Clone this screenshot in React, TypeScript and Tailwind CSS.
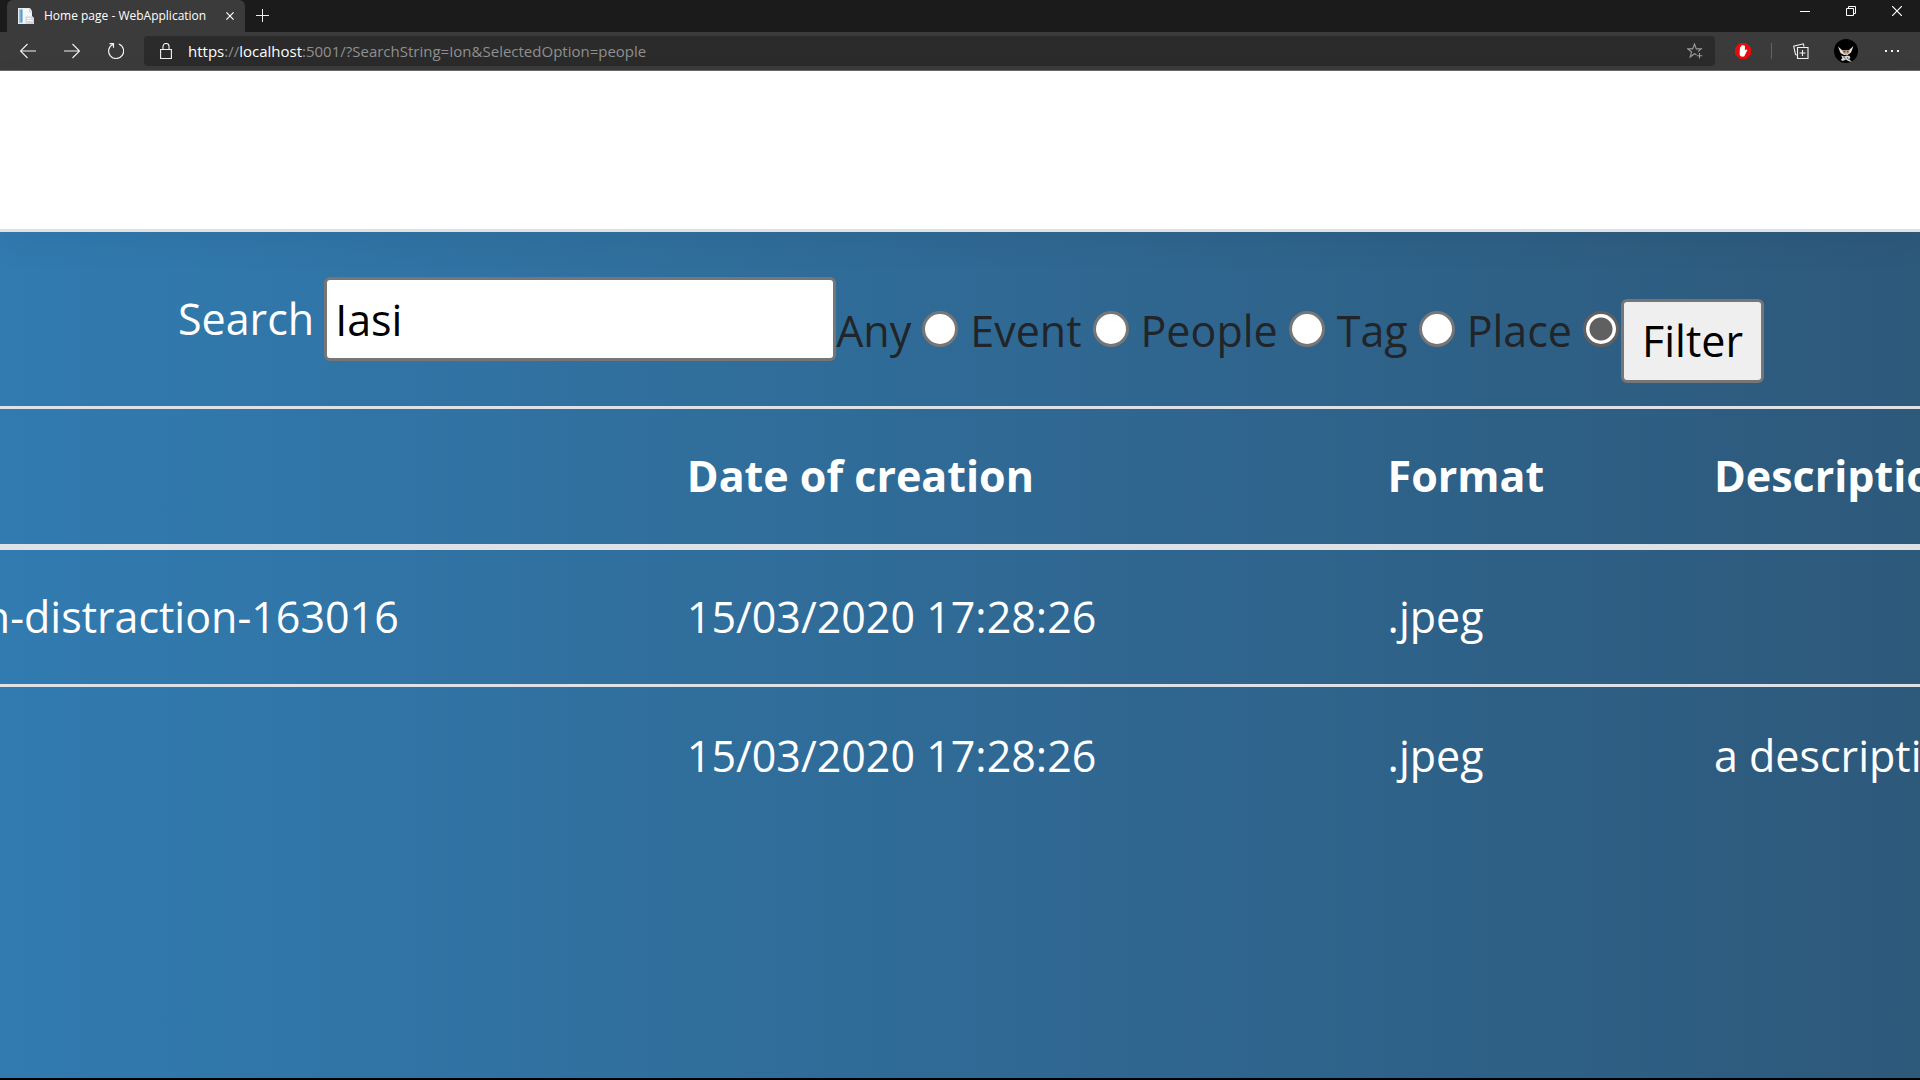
import React from "react";

const OPTIONS = ["Any", "Event", "People", "Tag", "Place"];

const ROWS = [
  { name: "n-distraction-163016", date: "15/03/2020 17:28:26", format: ".jpeg", description: "" },
  { name: "", date: "15/03/2020 17:28:26", format: ".jpeg", description: "a description" },
];

function PageIcon() {
  return (
    <svg width="16" height="16" viewBox="0 0 16 16" aria-hidden="true">
      <path d="M0 0h12l2 3v5l2 2v6H0z" fill="#e4eaee" />
      <path d="M1 1.500h3.500v13H1z" fill="#5b9bc8" />
      <path d="M1 2h1.500v12.500H1z" fill="#8fc6ea" />
      <path d="M5 .8h6.500V4H14v4.500H8V15H5z" fill="#f5f6f7" />
      <path d="M11.500.8V4H14" fill="none" stroke="#c3cad1" strokeWidth=".8" />
      <path d="M7.500 8.500H14l2 1.500v6H7.500z" fill="#d3d9df" />
      <path d="M9 10.500h4M9 12.500h5.500" stroke="#fff" strokeWidth="1" />
    </svg>
  );
}

function Arrow({ flip = false }: { flip?: boolean }) {
  return (
    <svg width="16" height="16" viewBox="0 0 16 16" fill="none" stroke="#f2f2f2" strokeWidth="1.1" aria-hidden="true">
      {flip ? <path d="M0 8h15.500M8.500 1l7 7-7 7" /> : <path d="M16 8H.5M7.500 1l-7 7 7 7" />}
    </svg>
  );
}

function TitleBar() {
  return (
    <div className="flex h-8 items-start bg-[#1b1b1b] pl-[7px]">
      <div className="flex h-8 w-[238px] items-center rounded-t-md bg-[#3b3b3b] pl-[11px] pr-[10px] text-white">
        <PageIcon />
        <span className="ml-[10px] flex-1 whitespace-nowrap text-[12px] leading-4">Home page - WebApplication</span>
        <button type="button" aria-label="Close tab" className="flex h-4 w-[10px] items-center justify-center">
          <svg width="8" height="8" viewBox="0 0 10 10" stroke="#fff" strokeWidth="1.5" aria-hidden="true">
            <path d="M.5 .5l9 9M9.500.5l-9 9" />
          </svg>
        </button>
      </div>
      <button type="button" aria-label="New tab" className="ml-2 flex h-[31px] w-[18px] items-center justify-center">
        <svg width="13" height="13" viewBox="0 0 13 13" stroke="#ececec" aria-hidden="true">
          <path d="M6.500 0v13M0 6.500h13" />
        </svg>
      </button>
      <div className="ml-auto flex h-[22px]">
        <button type="button" aria-label="Minimize" className="flex w-[46px] items-center justify-center">
          <svg width="10" height="10" viewBox="0 0 10 10" stroke="#fff" aria-hidden="true">
            <path d="M0 5.500h10" />
          </svg>
        </button>
        <button type="button" aria-label="Restore" className="flex w-[46px] items-center justify-center">
          <svg width="10" height="10" viewBox="0 0 10 10" fill="none" stroke="#fff" aria-hidden="true">
            <path d="M.5 2.500h7v7h-7zM2.500 2.500v-2h7v7h-2" />
          </svg>
        </button>
        <button type="button" aria-label="Close" className="flex w-[46px] items-center justify-center">
          <svg width="10" height="10" viewBox="0 0 10 10" stroke="#fff" strokeWidth="1.2" aria-hidden="true">
            <path d="M0 0l10 10M10 0L0 10" />
          </svg>
        </button>
      </div>
    </div>
  );
}

function Toolbar() {
  return (
    <div className="flex h-[39px] items-center border-b border-[#6a6a6a] bg-[#3b3b3b] pl-5 pr-[21px]">
      <div className="flex gap-7">
        <button type="button" aria-label="Back"><Arrow /></button>
        <button type="button" aria-label="Forward"><Arrow flip /></button>
        <button type="button" aria-label="Refresh">
          <svg width="16" height="16" viewBox="0 0 16 16" fill="none" stroke="#f2f2f2" strokeWidth="1.2" aria-hidden="true">
            <path d="M10.800 1A7.500 7.500 0 1 1 5 1.200M1.500 .6h4v4.200" />
          </svg>
        </button>
      </div>
      <div className="ml-5 flex h-[30px] flex-1 items-center rounded bg-[#2b2b2b] pl-4 pr-3">
        <svg width="12" height="16" viewBox="0 0 12 16" fill="none" stroke="#f2f2f2" strokeWidth="1.1" aria-hidden="true">
          <path d="M.6 6.500h10.800v9H.6zM3 6.500V3.500a3 3 0 0 1 6 0v3" />
        </svg>
        <div role="textbox" aria-label="Address" className="ml-4 flex-1 whitespace-nowrap text-[15px] leading-5 text-[#8f8f8f]">
          <span className="text-white">https</span>://<span className="text-white">localhost</span>
          :5001/?SearchString=Ion&amp;SelectedOption=people
        </div>
        <button type="button" aria-label="Add to favorites">
          <svg width="16" height="16" viewBox="0 0 16 16" fill="none" stroke="#9b9b9b" strokeWidth="1.1" aria-hidden="true">
            <path d="M9.500 11.800L7.500 10.700 3.200 14l1.400-5L.8 5.900h4.900L7.500 1l1.800 4.900h4.900L11 8.700" />
            <path d="M12.500 10v5.500M9.800 12.700h5.500" />
          </svg>
        </button>
      </div>
      <button type="button" aria-label="Ad blocker" className="ml-5">
        <svg width="16" height="16" viewBox="0 0 16 16" aria-hidden="true">
          <path d="M4.700 0h6.600L16 4.700v6.600L11.300 16H4.700L0 11.300V4.700z" fill="#e40d0d" />
          <path d="M5 4.200q.6-.7 1.100 0V2.800q.7-.9 1.200 0V2.200q.7-.8 1.200 0v.7q.9-.7 1.400 0v4.900l.8-1q1.100-.6 1.700.1l-2.200 4.500Q9.600 13.700 7.800 13.700 4.600 13.700 4.600 10.800z" fill="#fff" />
        </svg>
      </button>
      <div className="ml-5 h-4 w-px bg-[#626262]" />
      <button type="button" aria-label="Collections" className="ml-[21px]">
        <svg width="16" height="16" viewBox="0 0 16 16" fill="none" stroke="#f2f2f2" strokeWidth="1.100" aria-hidden="true">
          <path d="M4.500 4.500h10.500v11h-10.500zM9.500 7v6M6.500 10h6" />
          <path d="M3.700 12.300L2.500 11.500.7 3.200 10.300.8l.8 2.700" />
        </svg>
      </button>
      <button type="button" aria-label="Profile" className="ml-[25px]">
        <svg width="24" height="24" viewBox="0 0 24 24" aria-hidden="true">
          <circle cx="12" cy="12" r="12" fill="#000" />
          <path d="M4 7.500l4.500 4h6L19.500 7l-2.500 6.500-3.500 2.500H10l-3.500-2z" fill="#e8e4dc" />
          <path d="M8 11.500h8l-1.500 3-2.500 1.500-2.500-1.500z" fill="#c9a88b" />
          <path d="M9.500 12.800h2M13 12.800h1.500" stroke="#222" />
          <path d="M7 16.500l3.500 1 2-1 3 .5 1 2-1.500 1 3 3-4-1-2-1.500-2 1-2 .5-1-1.500 1.500-1.500z" fill="#d7d7d7" />
          <path d="M9.500 18l2 1.500M13 18l1.500 2.500" stroke="#444" strokeWidth=".8" />
        </svg>
      </button>
      <button type="button" aria-label="Settings and more" className="ml-[27px]">
        <svg width="14" height="16" viewBox="0 0 14 16" fill="#f2f2f2" aria-hidden="true">
          <path d="M0 7h2v2H0zM6 7h2v2H6zM12 7h2v2h-2z" />
        </svg>
      </button>
    </div>
  );
}

function SearchForm() {
  return (
    <form className="flex h-[174px] items-start pl-[178px] pt-[45px] whitespace-nowrap" onSubmit={(e) => e.preventDefault()}>
      <label htmlFor="search" className="leading-[84px] text-white">Search</label>
      <input
        id="search"
        name="SearchString"
        type="text"
        defaultValue="Iasi"
        className="ml-[10px] h-[84px] w-[512px] shrink-0 rounded-md border-[3px] border-[#767676] bg-white px-2 text-black"
      />
      <div className="flex pt-3">
        {OPTIONS.map((option) => (
          <label key={option} className="mr-3 flex items-center gap-[11px] leading-[84px] last:mr-0">
            {option}
            <input
              type="radio"
              name="SelectedOption"
              value={option.toLowerCase()}
              defaultChecked={option === "Place"}
              className="mb-1 size-9 shrink-0 appearance-none rounded-full border-[3px] border-[#767676] bg-white checked:border-[#606060] checked:bg-[radial-gradient(circle,#606060_11px,#ffffff_12px)]"
            />
          </label>
        ))}
      </div>
      <button
        type="submit"
        className="ml-[2px] mt-[22px] h-[84px] shrink-0 rounded-md border-[3px] border-[#767676] bg-[#efefef] px-[18px] text-black"
      >
        Filter
      </button>
    </form>
  );
}

function FilesTable() {
  return (
    <table className="w-full table-fixed text-left whitespace-nowrap text-white">
      <colgroup>
        <col className="w-[34%]" />
        <col className="w-[36.500%]" />
        <col className="w-[17%]" />
        <col />
      </colgroup>
      <thead>
        <tr className="h-[139px] border-t-[3px] border-b-[6px] border-[#dee2e6] [&>th]:px-[34px] [&>th]:font-bold">
          <th aria-label="Name" />
          <th>Date of creation</th>
          <th>Format</th>
          <th>Description</th>
        </tr>
      </thead>
      <tbody>
        {ROWS.map((row, i) => (
          <tr key={i} className="h-[139px] border-b-[3px] border-[#dee2e6] last:border-b-0 [&>td]:px-[34px]">
            <td>
              <div className="-ml-[34px] flex justify-end pr-[220px]">{row.name}</div>
            </td>
            <td>{row.date}</td>
            <td>{row.format}</td>
            <td>{row.description}</td>
          </tr>
        ))}
      </tbody>
    </table>
  );
}

export default function App() {
  return (
    <div className="flex h-screen flex-col overflow-hidden border-b-2 border-black font-['Open_Sans',sans-serif]">
      <TitleBar />
      <Toolbar />
      <header className="relative z-10 h-[161px] shrink-0 border-b-[3px] border-[#dee2e6] bg-white shadow-[0_11px_34px_rgba(0,0,0,0.05)]" />
      <main className="flex-1 overflow-hidden bg-linear-to-r from-[#317bb0] to-[#2d597b] text-[43px] text-[#212529]">
        <SearchForm />
        <FilesTable />
      </main>
    </div>
  );
}
